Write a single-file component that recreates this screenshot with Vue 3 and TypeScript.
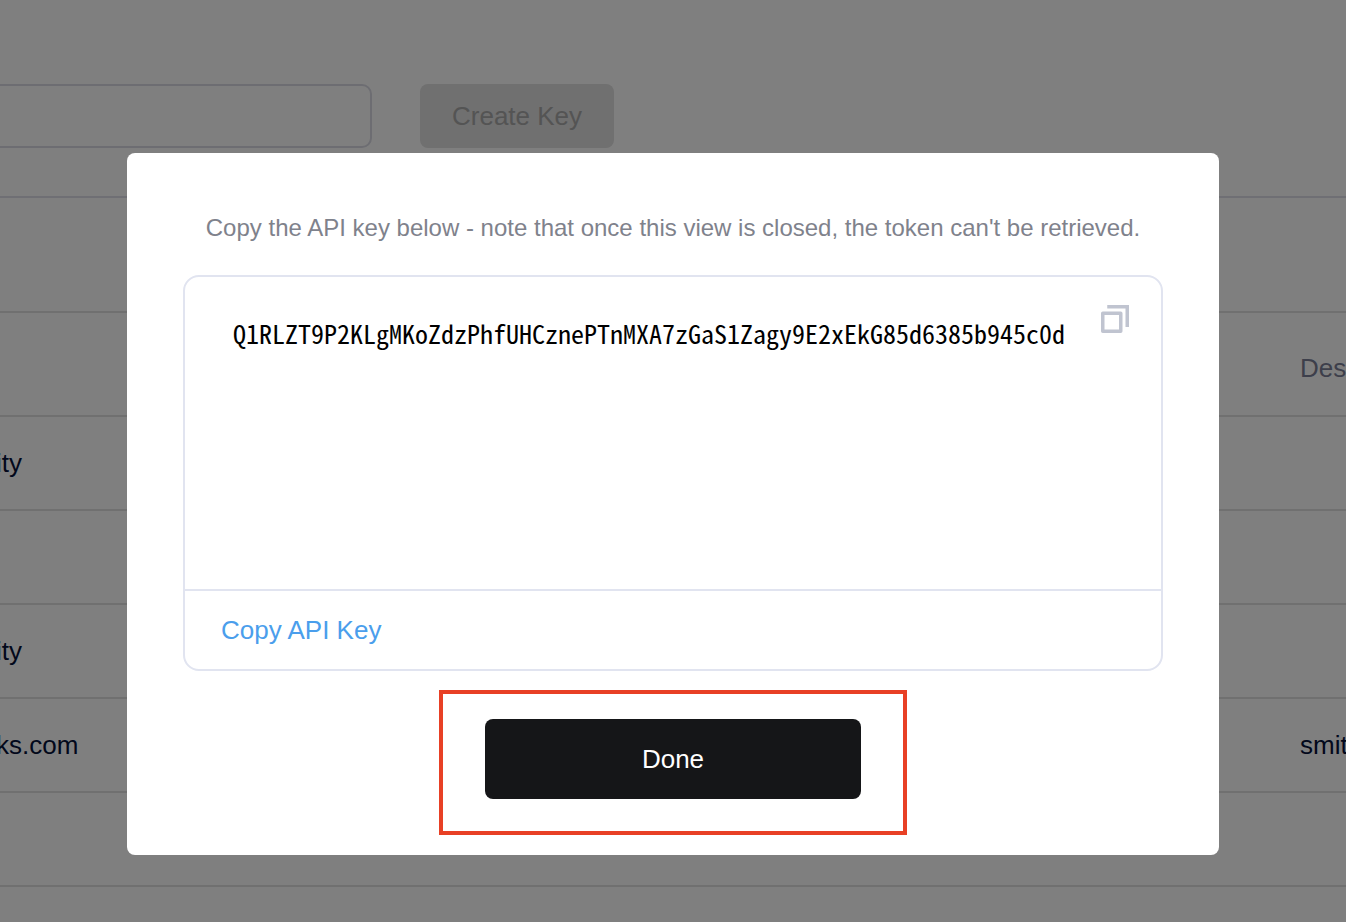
<script setup lang="ts">
import { ref } from 'vue'

interface KeyRow {
  owner: string
  description: string
}

const apiKey = 'Q1RLZT9P2KLgMKoZdzPhfUHCznePTnMXA7zGaS1Zagy9E2xEkG85d6385b945c0d'

const rows: KeyRow[] = [
  { owner: 'ity', description: '' },
  { owner: '', description: '' },
  { owner: 'ity', description: '' },
  { owner: 'ks.com', description: 'smit' },
  { owner: '', description: '' },
]

const keyName = ref('')
const open = ref(true)

function copyKey(): void {
  navigator.clipboard?.writeText(apiKey)
}
</script>

<template>
  <div class="app">
    <main class="page">
      <form class="create" @submit.prevent>
        <input v-model="keyName" class="name" type="text" aria-label="Key name" />
        <button class="create-button" type="submit" disabled>Create Key</button>
      </form>
      <table class="keys">
        <colgroup>
          <col />
          <col class="description-col" />
        </colgroup>
        <thead>
          <tr>
            <th></th>
            <th>Des</th>
          </tr>
        </thead>
        <tbody>
          <tr v-for="(row, i) in rows" :key="i">
            <td>{{ row.owner }}</td>
            <td>{{ row.description }}</td>
          </tr>
        </tbody>
      </table>
    </main>

    <div v-if="open" class="overlay">
      <section class="modal" role="dialog" aria-modal="true" aria-describedby="key-note">
        <p id="key-note" class="note">
          Copy the API key below - note that once this view is closed, the token can't be retrieved.
        </p>
        <div class="key-box">
          <div class="key-body">
            <code class="key">{{ apiKey }}</code>
            <button class="icon-button" type="button" aria-label="Copy" @click="copyKey">
              <svg width="28" height="28" viewBox="0 0 28 28" fill="none" stroke="#c0c4d0" stroke-width="3.5">
                <rect x="1.75" y="8.25" width="18" height="18" stroke-linejoin="round" />
                <path d="M6.25 1.75H26.25V22" />
              </svg>
            </button>
          </div>
          <div class="key-footer">
            <button class="copy-button" type="button" @click="copyKey">Copy API Key</button>
          </div>
        </div>
        <div class="highlight">
          <button class="done" type="button" @click="open = false">Done</button>
        </div>
      </section>
    </div>
  </div>
</template>

<style>
body {
  margin: 0;
  background: #fff;
}
</style>

<style scoped>
.app {
  position: relative;
  height: 100vh;
  overflow: hidden;
  font-family: "Liberation Sans", Arial, sans-serif;
  font-size: 26px;
  line-height: 32px;
}

.app * {
  box-sizing: border-box;
}

button {
  padding: 0;
  border: 0;
  background: none;
  font: inherit;
}

.create {
  display: flex;
  gap: 48px;
  padding: 84px 0 48px;
  border-bottom: 2px solid #dedfe8;
}

.name {
  width: 384px;
  height: 64px;
  margin-left: -12px;
  padding: 0 24px;
  border: 2px solid #dadbe4;
  border-radius: 10px;
  background: #fff;
  font: inherit;
}

.create-button {
  height: 64px;
  padding: 0 32px;
  border-radius: 8px;
  background: #e0e0e0;
  color: #a8a8a8;
}

.keys {
  width: 100%;
  margin-top: 113px;
  border-top: 2px solid #e0e0e0;
  border-spacing: 0;
  table-layout: fixed;
}

.description-col {
  width: 46px;
}

.keys th,
.keys td {
  height: 94px;
  padding: 0;
  border-bottom: 2px solid #e0e0e0;
  color: #041038;
  font-weight: 400;
  text-align: left;
  white-space: nowrap;
}

.keys th {
  height: 104px;
  padding-top: 8px;
  color: #7a7e96;
}

.keys td:first-child {
  text-indent: -4px;
}

.overlay {
  position: absolute;
  inset: 0;
  padding: 153px 24px 24px;
  background: rgba(0, 0, 0, 0.5);
}

.modal {
  max-width: 1092px;
  margin: 0 auto;
  padding: 59px 56px 20px;
  border-radius: 8px;
  background: #fff;
}

.note {
  margin: 0 0 31px;
  color: #7f828c;
  font-size: 24px;
  text-align: center;
}

.key-box {
  border: 2px solid #e1e4f0;
  border-radius: 16px;
}

.key-body {
  display: flex;
  align-items: flex-start;
  justify-content: space-between;
  min-height: 312px;
  padding: 28px 32px 28px 48px;
}

.key {
  margin-top: 12px;
  color: #000;
  font-family: "Noto Sans Mono CJK SC", "Liberation Mono", monospace;
  font-size: 26px;
  font-variant-numeric: slashed-zero;
}

.icon-button {
  height: 28px;
  line-height: 0;
  cursor: pointer;
}

.key-footer {
  padding: 23px 36px;
  border-top: 2px solid #e1e4f0;
}

.copy-button {
  color: #4a9eec;
  cursor: pointer;
}

.highlight {
  max-width: 468px;
  margin: 19px auto 0;
  padding: 25px 42px 32px;
  border: 4px solid #e84025;
}

.done {
  width: 100%;
  height: 80px;
  border-radius: 8px;
  background: #151618;
  color: #fff;
  cursor: pointer;
}
</style>
